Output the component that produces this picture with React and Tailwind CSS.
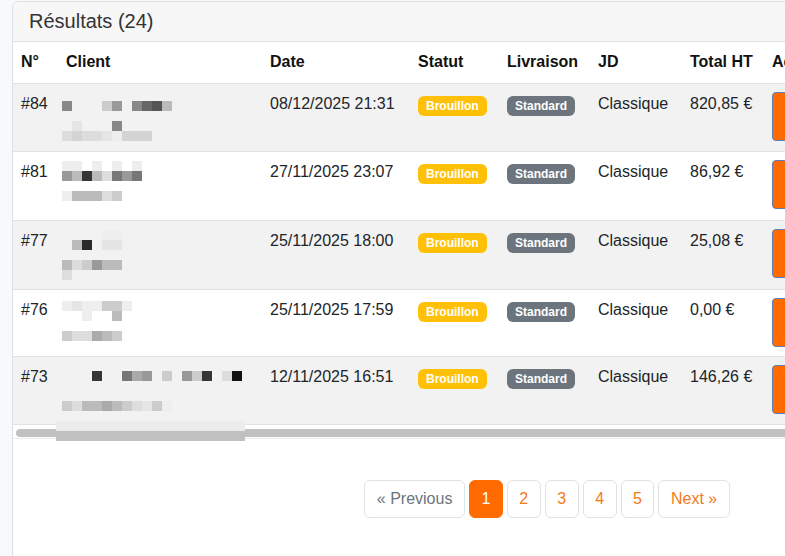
import React from "react";

const SHADES = {
  "0": "bg-[#111111]",
  "1": "bg-[#2a2a2a]",
  "2": "bg-[#363636]",
  "3": "bg-[#555555]",
  "4": "bg-[#666666]",
  "5": "bg-[#777777]",
  "6": "bg-[#888888]",
  "7": "bg-[#999999]",
  "8": "bg-[#aaaaaa]",
  "9": "bg-[#bbbbbb]",
  a: "bg-[#cccccc]",
  b: "bg-[#d4d4d4]",
  c: "bg-[#dddddd]",
  d: "bg-[#e5e5e5]",
  e: "bg-[#eeeeee]",
};

const orders = [
  {
    id: 84,
    date: "08/12/2025 21:31",
    total: "820,85 €",
    h: "h-[68px]",
    top: "mt-[7px]",
    lines: ["", "6...a7.6439", "", ".d...6", "cbccdebbb"],
  },
  {
    id: 81,
    date: "27/11/2025 23:07",
    total: "86,92 €",
    h: "h-[69px]",
    top: "mt-[9px]",
    lines: ["ee.e.e.e", "7929c575", "", "e999ca"],
  },
  {
    id: 77,
    date: "25/11/2025 18:00",
    total: "25,08 €",
    h: "h-[69px]",
    top: "mt-[9px]",
    lines: ["....ee", ".91.dd", "", "9ca799", "c"],
  },
  {
    id: 76,
    date: "25/11/2025 17:59",
    total: "0,00 €",
    h: "h-[67px]",
    top: "mt-[11px]",
    lines: ["edeeaae", "..e..9", "", "acc89a"],
  },
  {
    id: 73,
    date: "12/11/2025 16:51",
    total: "146,26 €",
    h: "h-[68px]",
    top: "mt-[4px]",
    lines: ["", "...2..587.a.7a2.c0", "", "", "ac9989acdae"],
  },
];

const Mosaic = ({ lines, top }) => (
  <div className={top}>
    {lines.map((line, i) => (
      <div key={i} className="flex h-[10px]">
        {line.split("").map((c, j) => (
          <span key={j} className={`w-[10px] h-[10px] ${SHADES[c] || ""}`} />
        ))}
      </div>
    ))}
  </div>
);

const Badge = ({ children, color }) => (
  <span
    className={`inline-block align-[-1px] rounded-md px-[8px] py-1 text-[12px] font-bold leading-none text-white ${color}`}
  >
    {children}
  </span>
);

const App = () => {
  const th = "text-left font-bold px-2 pt-2 pb-[9px] leading-6 border-b border-[#dee2e6]";
  const td = "px-2 pt-2 align-top leading-6 border-b border-[#dee2e6]";
  const page = "rounded-md border px-[11.5px] py-1.5";

  return (
    <div className="w-[785px] h-[556px] overflow-hidden bg-[#f8f9fa] font-['Liberation_Sans',Arial,sans-serif] text-[#212529]">
      <div className="ml-3 mt-px w-[1070px] min-h-[620px] rounded-md border border-[#dfdfdf] bg-white overflow-hidden">
        <div className="bg-[#f7f7f7] border-b border-[#dfdfdf] px-4 pt-[7px] pb-2 text-[20px] leading-6 text-[#333]">
          Résultats (24)
        </div>

        <div>
          <table className="w-full table-fixed border-separate border-spacing-0 text-base">
            <thead>
              <tr className="text-[#111]">
                <th className={`${th} w-[45px]`}>N°</th>
                <th className={`${th} w-[204px]`}>Client</th>
                <th className={`${th} w-[148px]`}>Date</th>
                <th className={`${th} w-[89px]`}>Statut</th>
                <th className={`${th} w-[91px]`}>Livraison</th>
                <th className={`${th} w-[92px]`}>JD</th>
                <th className={`${th} w-[82px]`}>Total HT</th>
                <th className={th}>Actions</th>
              </tr>
            </thead>
            <tbody>
              {orders.map((o, i) => (
                <tr key={o.id} className={`${o.h} ${i % 2 === 0 ? "bg-[#f2f2f2]" : "bg-white"}`}>
                  <td className={td}>#{o.id}</td>
                  <td className="px-1 align-top border-b border-[#dee2e6]">
                    <Mosaic lines={o.lines} top={o.top} />
                  </td>
                  <td className={td}>{o.date}</td>
                  <td className={td}>
                    <Badge color="bg-[#ffc107]">Brouillon</Badge>
                  </td>
                  <td className={td}>
                    <Badge color="bg-[#6c757d]">Standard</Badge>
                  </td>
                  <td className={td}>Classique</td>
                  <td className={td}>{o.total}</td>
                  <td className={td}>
                    <button className="h-[49px] w-[70px] rounded border border-[#5b7db8] bg-[#ff6b00]" />
                  </td>
                </tr>
              ))}
            </tbody>
          </table>

          <div className="relative pt-1 pb-px border-b border-[#ebebeb]">
            <div className="ml-[3px] h-2 w-[1000px] rounded-full bg-[#c1c1c1]" />
            <div className="absolute left-[43px] -top-[4px] w-[189px]">
              <div className="h-[10px] bg-[#ececec]" />
              <div className="h-[10px] bg-[#c0c0c0]" />
            </div>
          </div>
        </div>

        <div className="mt-[41px] flex justify-center gap-1 text-base leading-6">
          <span className={`${page} border-[#dee2e6] text-[#6c757d]`}>« Previous</span>
          <span className={`${page} border-[#ff6b00] bg-[#ff6b00] text-white`}>1</span>
          {[2, 3, 4, 5].map((n) => (
            <span key={n} className={`${page} border-[#dee2e6] text-[#f47a1c]`}>
              {n}
            </span>
          ))}
          <span className={`${page} border-[#dee2e6] text-[#f47a1c]`}>Next »</span>
        </div>
      </div>
    </div>
  );
};

export default App;
